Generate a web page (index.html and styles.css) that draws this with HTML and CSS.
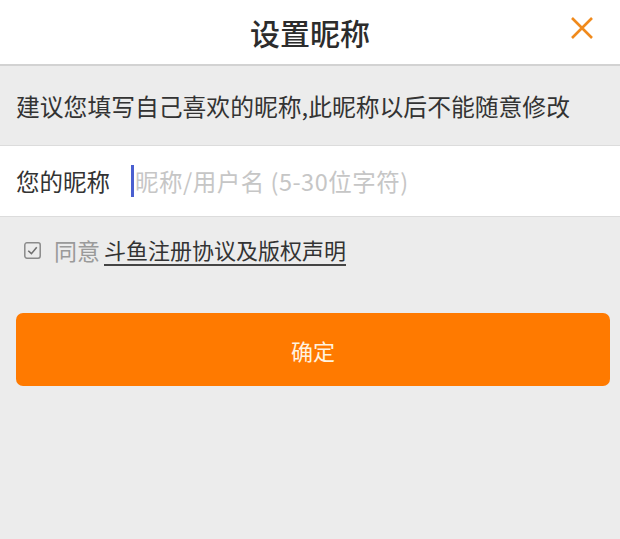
FILE: index.html
```html
<!DOCTYPE html>
<html lang="zh-CN">

<head>
    <meta charset="UTF-8">
    <meta name="viewport" content="width=device-width, initial-scale=1.0">
    <title>设置昵称</title>
    <link rel="stylesheet" href="styles.css">
</head>

<body>
    <div class="header">
        <span class="title">设置昵称</span>
        <button class="close">
            <svg width="24" height="24" viewBox="0 0 24 24">
                <path d="M2 2 L22 22 M22 2 L2 22" stroke="#f08a1c" stroke-width="2.6" fill="none" />
            </svg>
        </button>
    </div>
    <p class="tip">建议您填写自己喜欢的昵称,此昵称以后不能随意修改</p>
    <div class="field">
        <span class="label">您的昵称</span>
        <span class="caret"></span>
        <input type="text" class="name_input" placeholder="昵称/用户名 (5-30位字符)">
    </div>
    <div class="agree">
        <span class="check">
            <svg width="17" height="17" viewBox="0 0 16 16">
                <rect x="0.75" y="0.75" width="14.5" height="14.5" rx="2" stroke="#8a8a8a" stroke-width="1.4" fill="none" />
                <path d="M4 8.2 L7 11 L12 5" stroke="#707070" stroke-width="1.5" fill="none" />
            </svg>
        </span>
        <span class="agree_text">同意</span><a class="agree_link">斗鱼注册协议及版权声明</a>
    </div>
    <button class="submit">确定</button>
</body>

</html>
```

FILE: styles.css
```css
body {
    margin: 0;
    background-color: #ececec;
    font-family: "Noto Sans CJK SC", "Noto Sans", sans-serif;
    color: #333;
}

.header {
    height: 64px;
    background-color: #fff;
    border-bottom: 2px solid #d2d2d2;
    display: flex;
    align-items: center;
    justify-content: center;
    position: relative;
}

.title {
    font-size: 30px;
    font-weight: 500;
    color: #2c2c2c;
}

.close {
    position: absolute;
    right: 25px;
    top: 16px;
    width: 26px;
    height: 26px;
    padding: 0;
    border: none;
    background: none;
}

.tip {
    margin: 0;
    padding: 22px 16px 0 16px;
    height: 57px;
    font-size: 23.8px;
    line-height: 36px;
    color: #333;
}

.field {
    height: 70px;
    background-color: #fff;
    border-top: 1px solid #dcdcdc;
    border-bottom: 1px solid #dcdcdc;
    display: flex;
    align-items: center;
    padding-left: 16px;
}

.label {
    font-size: 23.5px;
    width: 115px;
    color: #333;
}

.caret {
    width: 3px;
    height: 32px;
    background-color: #4a5fd0;
    margin-right: 1px;
}

.name_input {
    flex: 1;
    border: none;
    outline: none;
    font-family: "Noto Sans CJK SC", "Noto Sans", sans-serif;
    font-size: 23.5px;
    letter-spacing: 0.5px;
    padding: 0;
    background: none;
}

.name_input::placeholder {
    color: #c6c6c6;
}

.agree {
    display: flex;
    align-items: center;
    height: 66px;
    padding-left: 24px;
    font-size: 23px;
}

.check {
    display: flex;
    margin-right: 13px;
}

.agree_text {
    color: #9a9a9a;
    margin-right: 4px;
}

.agree_link {
    color: #333;
    font-size: 22px;
    border-bottom: 2px solid #444;
    line-height: 30px;
}

.submit {
    display: block;
    margin: 30px 10px 0 16px;
    width: 594px;
    height: 73px;
    border: none;
    border-radius: 7px;
    background-color: #ff7a00;
    color: #fff3e0;
    font-family: "Noto Sans CJK SC", "Noto Sans", sans-serif;
    font-size: 22px;
}
```
